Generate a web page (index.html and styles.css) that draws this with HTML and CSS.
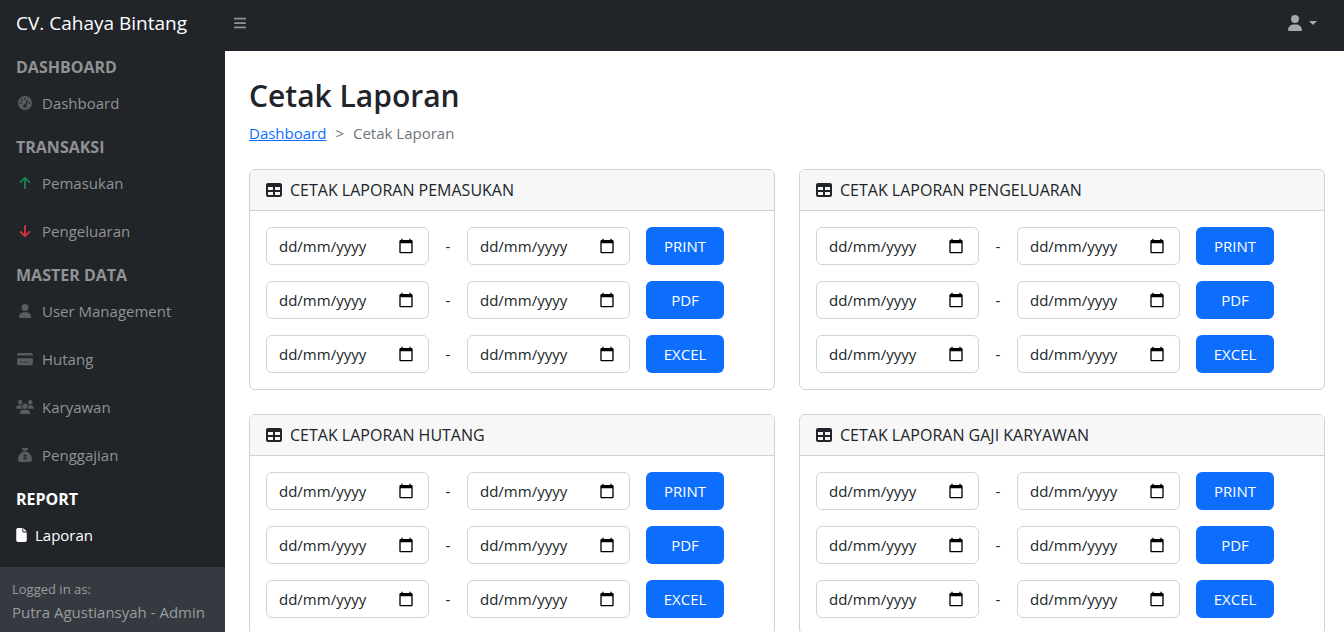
FILE: index.html
```
<!DOCTYPE html>
<html lang="id">
<head>
<meta charset="utf-8">
<meta name="viewport" content="width=device-width, initial-scale=1">
<title>Cetak Laporan</title>
<link rel="stylesheet" href="styles.css">
</head>
<body>
<svg class="sprite" aria-hidden="true">
  <symbol id="i-bars" viewBox="0 0 448 512"><path d="M0 96C0 78.3 14.3 64 32 64H416c17.7 0 32 14.3 32 32s-14.3 32-32 32H32C14.3 128 0 113.7 0 96zM0 256c0-17.7 14.3-32 32-32H416c17.7 0 32 14.3 32 32s-14.3 32-32 32H32c-17.7 0-32-14.3-32-32zM448 416c0 17.7-14.3 32-32 32H32c-17.7 0-32-14.3-32-32s14.3-32 32-32H416c17.7 0 32 14.3 32 32z"/></symbol>
  <symbol id="i-user" viewBox="0 0 448 512"><path d="M224 256A128 128 0 1 0 224 0a128 128 0 1 0 0 256zm-45.7 48C79.8 304 0 383.8 0 482.3C0 498.7 13.3 512 29.7 512H418.3c16.4 0 29.7-13.3 29.7-29.7C448 383.8 368.2 304 269.7 304H178.3z"/></symbol>
  <symbol id="i-gauge" viewBox="0 0 512 512"><path fill-rule="evenodd" d="M256 0a256 256 0 1 1 0 512 256 256 0 1 1 0-512zM256 64a32 32 0 1 0 0 64 32 32 0 1 0 0-64zM144 112a32 32 0 1 0 0 64 32 32 0 1 0 0-64zM96 224a32 32 0 1 0 0 64 32 32 0 1 0 0-64zM416 224a32 32 0 1 0 0 64 32 32 0 1 0 0-64zM320 368c0-16-6-31-16-42L373 167c5-12-1-26-13-31s-26 0-31 12L260 304c-38-2-68 28-68 64a64 64 0 1 0 128 0z"/></symbol>
  <symbol id="i-up" viewBox="0 0 384 512"><path d="M214.6 41.4c-12.5-12.5-32.8-12.5-45.3 0l-160 160c-12.5 12.5-12.5 32.8 0 45.3s32.8 12.5 45.3 0L160 141.2V448c0 17.7 14.3 32 32 32s32-14.3 32-32V141.2L329.4 246.6c12.5 12.5 32.8 12.5 45.3 0s12.5-32.8 0-45.3l-160-160z"/></symbol>
  <symbol id="i-down" viewBox="0 0 384 512"><path d="M169.4 470.6c12.5 12.5 32.8 12.5 45.3 0l160-160c12.5-12.5 12.5-32.8 0-45.3s-32.8-12.5-45.3 0L224 370.8V64c0-17.7-14.3-32-32-32s-32 14.3-32 32V370.7L54.6 265.4c-12.5-12.5-32.8-12.5-45.3 0s-12.5 32.8 0 45.3l160 160z"/></symbol>
  <symbol id="i-card" viewBox="0 0 576 512"><path d="M64 32C28.7 32 0 60.7 0 96v32H576V96c0-35.3-28.7-64-64-64H64zM576 224H0V416c0 35.3 28.7 64 64 64H512c35.3 0 64-28.7 64-64V224zM112 352h64c8.8 0 16 7.2 16 16s-7.2 16-16 16H112c-8.8 0-16-7.2-16-16s7.2-16 16-16zm112 16c0-8.8 7.2-16 16-16H368c8.8 0 16 7.2 16 16s-7.2 16-16 16H240c-8.8 0-16-7.2-16-16z"/></symbol>
  <symbol id="i-users" viewBox="0 0 640 512"><path d="M144 0a80 80 0 1 1 0 160A80 80 0 1 1 144 0zM512 0a80 80 0 1 1 0 160A80 80 0 1 1 512 0zM0 298.7C0 239.8 47.8 192 106.7 192h42.7c15.9 0 31 3.5 44.6 9.7c-1.3 7.2-1.9 14.7-1.9 22.3c0 38.2 16.8 72.5 43.3 96H21.3C9.6 320 0 310.4 0 298.7zM405.3 320c26.6-23.5 42.7-57.8 42.7-96c0-7.6-.7-15-1.9-22.3c13.6-6.3 28.7-9.7 44.6-9.7h42.7C592.2 192 640 239.8 640 298.7c0 11.8-9.6 21.3-21.3 21.3H405.3zM224 224a96 96 0 1 1 192 0 96 96 0 1 1 -192 0zM128 485.3C128 411.7 187.7 352 261.3 352H378.7C452.3 352 512 411.7 512 485.3c0 14.7-11.9 26.7-26.7 26.7H154.7c-14.7 0-26.7-11.9-26.7-26.7z"/></symbol>
  <symbol id="i-sack" viewBox="0 0 512 512"><path d="M320 96H192L144.6 24.9C137.5 14.2 145.1 0 157.9 0H354.1c12.8 0 20.4 14.2 13.3 24.9L320 96zM192 128H320c3.8 2.5 8.1 5.3 13 8.4C389.7 172.7 512 250.9 512 416c0 53-43 96-96 96H96c-53 0-96-43-96-96C0 250.9 122.3 172.7 179 136.4c4.8-3.1 9.2-5.9 13-8.4z"/><path class="sack-sign" d="M308 272c-20-10-34-13-52-13-28 0-47 12-47 32 0 45 98 22 98 67 0 20-20 33-50 33-20 0-36-6-54-14M256 232v28M256 390v28"/></symbol>
  <symbol id="i-file" viewBox="0 0 384 512"><path d="M0 64C0 28.7 28.7 0 64 0H224V128c0 17.7 14.3 32 32 32H384V448c0 35.3-28.7 64-64 64H64c-35.3 0-64-28.7-64-64V64zm384 64H256V0L384 128z"/></symbol>
  <symbol id="i-table" viewBox="0 0 512 512"><path d="M64 256V160H224v96H64zm0 64H224v96H64V320zm224 96V320H448v96H288zM448 256H288V160H448v96zM64 32C28.7 32 0 60.7 0 96V416c0 35.3 28.7 64 64 64H448c35.3 0 64-28.7 64-64V96c0-35.3-28.7-64-64-64H64z"/></symbol>
  <symbol id="i-cal" viewBox="0 0 24 24"><path d="M20 3h-1V1h-2v2H7V1H5v2H4c-1.1 0-2 .9-2 2v16c0 1.1.9 2 2 2h16c1.1 0 2-.9 2-2V5c0-1.1-.9-2-2-2zm0 18H4V8h16v13z"/></symbol>
</svg>

<header class="topbar">
  <a class="brand" href="#">CV. Cahaya Bintang</a>
  <button class="toggle" type="button" aria-label="Menu"><svg class="icon"><use href="#i-bars"/></svg></button>
  <button class="account" type="button" aria-label="Akun"><svg class="icon"><use href="#i-user"/></svg><span class="caret"></span></button>
</header>

<div class="layout">
  <aside class="sidebar">
    <nav class="menu">
      <div class="heading">DASHBOARD</div>
      <a class="item" href="#"><svg class="icon"><use href="#i-gauge"/></svg>Dashboard</a>
      <div class="heading">TRANSAKSI</div>
      <a class="item" href="#"><svg class="icon green"><use href="#i-up"/></svg>Pemasukan</a>
      <a class="item" href="#"><svg class="icon red"><use href="#i-down"/></svg>Pengeluaran</a>
      <div class="heading">MASTER DATA</div>
      <a class="item" href="#"><svg class="icon"><use href="#i-user"/></svg>User Management</a>
      <a class="item" href="#"><svg class="icon"><use href="#i-card"/></svg>Hutang</a>
      <a class="item" href="#"><svg class="icon"><use href="#i-users"/></svg>Karyawan</a>
      <a class="item" href="#"><svg class="icon"><use href="#i-sack"/></svg>Penggajian</a>
      <div class="heading active">REPORT</div>
      <a class="item active" href="#"><svg class="icon"><use href="#i-file"/></svg>Laporan</a>
    </nav>
    <div class="login">
      <div class="small">Logged in as:</div>
      <div>Putra Agustiansyah - Admin</div>
    </div>
  </aside>

  <main class="content">
    <h1>Cetak Laporan</h1>
    <nav class="crumbs" aria-label="Breadcrumb"><a href="#">Dashboard</a><span>&gt;</span><span>Cetak Laporan</span></nav>
    <div class="cards">
      <section class="card">
        <h2><svg class="icon"><use href="#i-table"/></svg>CETAK LAPORAN PEMASUKAN</h2>
        <div class="forms">
          <form class="range">
            <span class="date"><input type="text" placeholder="dd/mm/yyyy" aria-label="Pemasukan print, dari"><svg><use href="#i-cal"/></svg></span><span class="dash">-</span>
            <span class="date"><input type="text" placeholder="dd/mm/yyyy" aria-label="Pemasukan print, sampai"><svg><use href="#i-cal"/></svg></span>
            <button type="button">PRINT</button>
          </form>
          <form class="range">
            <span class="date"><input type="text" placeholder="dd/mm/yyyy" aria-label="Pemasukan PDF, dari"><svg><use href="#i-cal"/></svg></span><span class="dash">-</span>
            <span class="date"><input type="text" placeholder="dd/mm/yyyy" aria-label="Pemasukan PDF, sampai"><svg><use href="#i-cal"/></svg></span>
            <button type="button">PDF</button>
          </form>
          <form class="range">
            <span class="date"><input type="text" placeholder="dd/mm/yyyy" aria-label="Pemasukan Excel, dari"><svg><use href="#i-cal"/></svg></span><span class="dash">-</span>
            <span class="date"><input type="text" placeholder="dd/mm/yyyy" aria-label="Pemasukan Excel, sampai"><svg><use href="#i-cal"/></svg></span>
            <button type="button">EXCEL</button>
          </form>
        </div>
      </section>
      <section class="card">
        <h2><svg class="icon"><use href="#i-table"/></svg>CETAK LAPORAN PENGELUARAN</h2>
        <div class="forms">
          <form class="range">
            <span class="date"><input type="text" placeholder="dd/mm/yyyy" aria-label="Pengeluaran print, dari"><svg><use href="#i-cal"/></svg></span><span class="dash">-</span>
            <span class="date"><input type="text" placeholder="dd/mm/yyyy" aria-label="Pengeluaran print, sampai"><svg><use href="#i-cal"/></svg></span>
            <button type="button">PRINT</button>
          </form>
          <form class="range">
            <span class="date"><input type="text" placeholder="dd/mm/yyyy" aria-label="Pengeluaran PDF, dari"><svg><use href="#i-cal"/></svg></span><span class="dash">-</span>
            <span class="date"><input type="text" placeholder="dd/mm/yyyy" aria-label="Pengeluaran PDF, sampai"><svg><use href="#i-cal"/></svg></span>
            <button type="button">PDF</button>
          </form>
          <form class="range">
            <span class="date"><input type="text" placeholder="dd/mm/yyyy" aria-label="Pengeluaran Excel, dari"><svg><use href="#i-cal"/></svg></span><span class="dash">-</span>
            <span class="date"><input type="text" placeholder="dd/mm/yyyy" aria-label="Pengeluaran Excel, sampai"><svg><use href="#i-cal"/></svg></span>
            <button type="button">EXCEL</button>
          </form>
        </div>
      </section>
      <section class="card">
        <h2><svg class="icon"><use href="#i-table"/></svg>CETAK LAPORAN HUTANG</h2>
        <div class="forms">
          <form class="range">
            <span class="date"><input type="text" placeholder="dd/mm/yyyy" aria-label="Hutang print, dari"><svg><use href="#i-cal"/></svg></span><span class="dash">-</span>
            <span class="date"><input type="text" placeholder="dd/mm/yyyy" aria-label="Hutang print, sampai"><svg><use href="#i-cal"/></svg></span>
            <button type="button">PRINT</button>
          </form>
          <form class="range">
            <span class="date"><input type="text" placeholder="dd/mm/yyyy" aria-label="Hutang PDF, dari"><svg><use href="#i-cal"/></svg></span><span class="dash">-</span>
            <span class="date"><input type="text" placeholder="dd/mm/yyyy" aria-label="Hutang PDF, sampai"><svg><use href="#i-cal"/></svg></span>
            <button type="button">PDF</button>
          </form>
          <form class="range">
            <span class="date"><input type="text" placeholder="dd/mm/yyyy" aria-label="Hutang Excel, dari"><svg><use href="#i-cal"/></svg></span><span class="dash">-</span>
            <span class="date"><input type="text" placeholder="dd/mm/yyyy" aria-label="Hutang Excel, sampai"><svg><use href="#i-cal"/></svg></span>
            <button type="button">EXCEL</button>
          </form>
        </div>
      </section>
      <section class="card">
        <h2><svg class="icon"><use href="#i-table"/></svg>CETAK LAPORAN GAJI KARYAWAN</h2>
        <div class="forms">
          <form class="range">
            <span class="date"><input type="text" placeholder="dd/mm/yyyy" aria-label="Gaji print, dari"><svg><use href="#i-cal"/></svg></span><span class="dash">-</span>
            <span class="date"><input type="text" placeholder="dd/mm/yyyy" aria-label="Gaji print, sampai"><svg><use href="#i-cal"/></svg></span>
            <button type="button">PRINT</button>
          </form>
          <form class="range">
            <span class="date"><input type="text" placeholder="dd/mm/yyyy" aria-label="Gaji PDF, dari"><svg><use href="#i-cal"/></svg></span><span class="dash">-</span>
            <span class="date"><input type="text" placeholder="dd/mm/yyyy" aria-label="Gaji PDF, sampai"><svg><use href="#i-cal"/></svg></span>
            <button type="button">PDF</button>
          </form>
          <form class="range">
            <span class="date"><input type="text" placeholder="dd/mm/yyyy" aria-label="Gaji Excel, dari"><svg><use href="#i-cal"/></svg></span><span class="dash">-</span>
            <span class="date"><input type="text" placeholder="dd/mm/yyyy" aria-label="Gaji Excel, sampai"><svg><use href="#i-cal"/></svg></span>
            <button type="button">EXCEL</button>
          </form>
        </div>
      </section>
    </div>
  </main>
</div>
</body>
</html>
```

FILE: styles.css
```
* { box-sizing: border-box; }

body {
  margin: 0;
  height: 100vh;
  display: flex;
  flex-direction: column;
  overflow: hidden;
  background: #fff;
  color: #212529;
  font-family: "Segoe UI", "Open Sans", "Noto Sans", sans-serif;
  font-size: 15px;
  line-height: 24px;
}

button, input { font: inherit; }
svg { fill: currentColor; }
.sprite { display: none; }
.icon { width: 18px; height: 14px; flex: none; }

/* Top bar */
.topbar {
  flex: none;
  display: flex;
  align-items: center;
  padding: 8px 24px 13px 0;
  background: #212529;
}
.brand {
  width: 225px;
  padding-left: 16px;
  color: #fff;
  font-size: 19px;
  line-height: 30px;
  text-decoration: none;
}
.toggle, .account {
  display: flex;
  align-items: center;
  padding: 0;
  border: 0;
  background: none;
  color: #909294;
}
.toggle { padding-left: 6px; }
.account { margin-left: auto; gap: 4px; color: #a6a8a9; }
.account .icon { width: 20px; height: 16px; }
.caret {
  margin-right: 3px;
  border: 4px solid transparent;
  border-top-color: currentColor;
  border-bottom: 0;
}

/* Shell */
.layout { flex: 1; min-height: 0; display: flex; }
.sidebar {
  flex: none;
  width: 225px;
  display: flex;
  flex-direction: column;
  background: #212529;
  color: #909294;
}
.menu { flex: 1; min-height: 0; overflow: hidden; }
.heading { padding: 8px 16px 0; font-size: 16px; font-weight: 700; }
.heading:first-child { padding-top: 4px; }
.item {
  display: flex;
  align-items: center;
  gap: 8px;
  padding: 12px 16px;
  color: inherit;
  text-decoration: none;
}
.item .icon { color: #595c5f; }
.item .green { color: #198754; }
.item .red { color: #dc3545; }
.active, .item.active .icon { color: #fff; }
.item.active .icon { width: 11px; }
.sack-sign { fill: none; stroke: #212529; stroke-width: 36; stroke-linecap: round; }
.login { padding: 12px 12px 8px; background: #343a40; color: #999c9f; white-space: nowrap; }
.small { font-size: 13px; line-height: 21px; }

/* Content */
.content { flex: 1; min-width: 0; padding: 24px 19px 24px 24px; overflow: auto; }
h1 { margin: 0 0 4px; font-size: 30px; line-height: 42px; font-weight: 600; }
.crumbs { display: flex; gap: 9px; margin-bottom: 24px; color: #6c757d; }
.crumbs a { color: #0d6efd; }
.cards { display: grid; grid-template-columns: 1fr 1fr; gap: 24px; }
.card { border: 1px solid #d0d1d2; border-radius: 6px; overflow: hidden; }
.card h2 {
  display: flex;
  align-items: center;
  gap: 8px;
  margin: 0;
  padding: 8px 16px;
  border-bottom: 1px solid #d0d1d2;
  background: #f7f7f7;
  font-size: 16px;
  line-height: 24px;
  font-weight: 500;
}
.card h2 .icon { width: 16px; height: 16px; }
.forms { display: flex; flex-direction: column; gap: 16px; padding: 16px; }
.range { display: flex; align-items: center; gap: 16px; }
.date { position: relative; width: 163px; }
.date input {
  display: block;
  width: 100%;
  height: 38px;
  padding: 6px 12px;
  border: 1px solid #ced4da;
  border-radius: 6px;
  background: #fff;
  color: #212529;
}
.date input::placeholder { color: #212529; opacity: 1; }
.date svg {
  position: absolute;
  top: 11px;
  right: 15px;
  width: 16px;
  height: 16px;
  color: #000;
  pointer-events: none;
}
.dash { width: 6px; text-align: center; }
.range button {
  width: 78px;
  height: 38px;
  padding: 0;
  border: 0;
  border-radius: 6px;
  background: #0d6efd;
  color: #fff;
}
```
